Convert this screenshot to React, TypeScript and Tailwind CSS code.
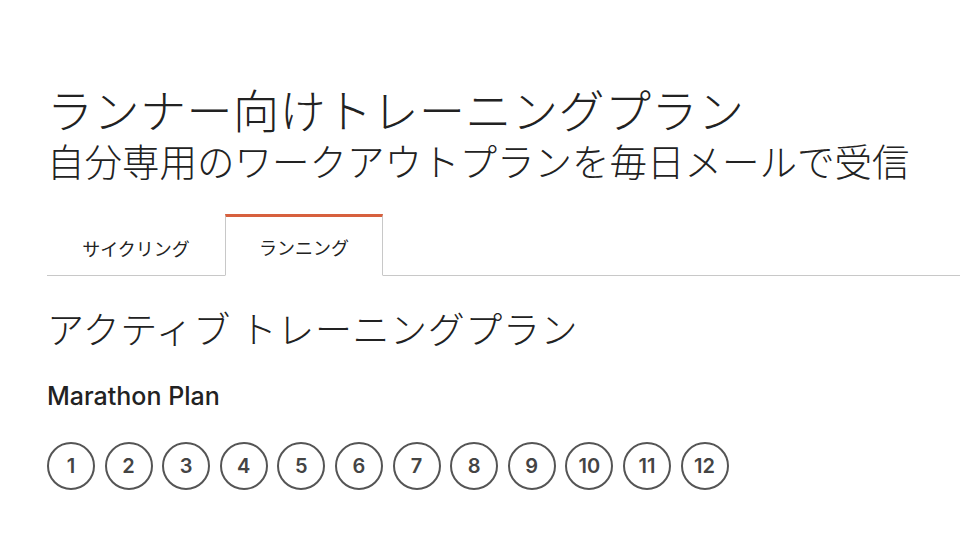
import { useState } from 'react';

const tabs = ['サイクリング', 'ランニング'];
const weeks = [1, 2, 3, 4, 5, 6, 7, 8, 9, 10, 11, 12];

export default function App() {
  const [active, setActive] = useState(1);

  return (
    <div className="min-h-[540px] w-[960px] bg-white pl-[47px] pt-[78px] text-[#222] [font-family:'Noto_Sans_CJK_JP','Noto_Sans',sans-serif]">
      <h1 className="text-[46px] font-light leading-[60px] tracking-[0.5px]">ランナー向けトレーニングプラン</h1>
      <p className="text-[37.5px] font-light leading-[44px]">自分専用のワークアウトプランを毎日メールで受信</p>

      <div className="mt-[32px] flex border-b border-[#c8c8c8]">
        {tabs.map((tab, i) => (
          <button
            key={tab}
            onClick={() => setActive(i)}
            className={`-mb-px h-[62px] pt-[3px] text-[18px] ${
              i === active
                ? 'w-[158px] border-x border-b border-t-[3px] border-x-[#c8c8c8] border-b-white border-t-[#d7603e] bg-white'
                : 'w-[178px] border-t-[3px] border-transparent'
            }`}
          >
            {tab}
          </button>
        ))}
      </div>

      <h2 className="mt-[24px] text-[37px] font-light leading-[56px] tracking-[0.6px]">アクティブ トレーニングプラン</h2>

      <h3 className="mt-[24px] text-[25px] leading-[32px] font-medium text-[#222] [font-family:Inter,'Noto_Sans',sans-serif]">Marathon Plan</h3>

      <div className="mt-[30px] flex gap-[9.6px]">
        {weeks.map(w => (
          <div
            key={w}
            className="flex h-[48px] w-[48px] items-center justify-center rounded-full border-2 border-[#555] text-[20px] font-semibold text-[#444] [font-family:Inter,sans-serif]"
          >
            {w}
          </div>
        ))}
      </div>
    </div>
  );
}
